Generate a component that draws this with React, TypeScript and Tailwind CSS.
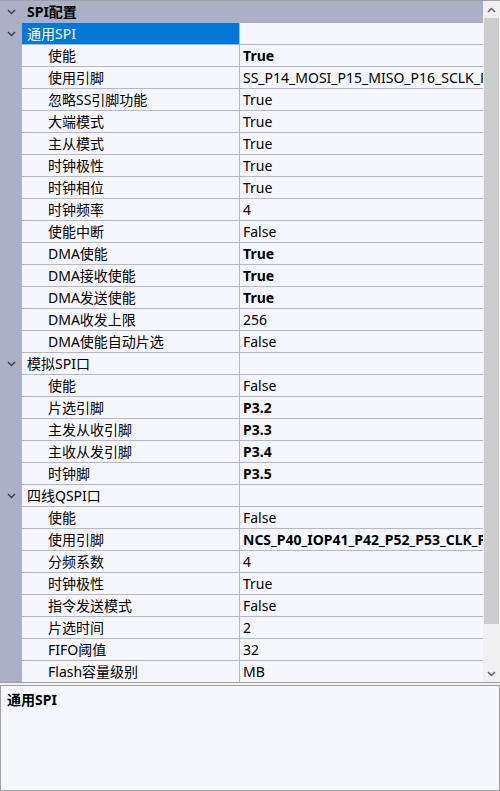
import React from "react";

type Row =
  | { kind: "cat"; label: string; selected?: boolean }
  | { kind: "prop"; label: string; value: string; bold?: boolean };

const rows: Row[] = [
  { kind: "cat", label: "通用SPI", selected: true },
  { kind: "prop", label: "使能", value: "True", bold: true },
  { kind: "prop", label: "使用引脚", value: "SS_P14_MOSI_P15_MISO_P16_SCLK_P17" },
  { kind: "prop", label: "忽略SS引脚功能", value: "True" },
  { kind: "prop", label: "大端模式", value: "True" },
  { kind: "prop", label: "主从模式", value: "True" },
  { kind: "prop", label: "时钟极性", value: "True" },
  { kind: "prop", label: "时钟相位", value: "True" },
  { kind: "prop", label: "时钟频率", value: "4" },
  { kind: "prop", label: "使能中断", value: "False" },
  { kind: "prop", label: "DMA使能", value: "True", bold: true },
  { kind: "prop", label: "DMA接收使能", value: "True", bold: true },
  { kind: "prop", label: "DMA发送使能", value: "True", bold: true },
  { kind: "prop", label: "DMA收发上限", value: "256" },
  { kind: "prop", label: "DMA使能自动片选", value: "False" },
  { kind: "cat", label: "模拟SPI口" },
  { kind: "prop", label: "使能", value: "False" },
  { kind: "prop", label: "片选引脚", value: "P3.2", bold: true },
  { kind: "prop", label: "主发从收引脚", value: "P3.3", bold: true },
  { kind: "prop", label: "主收从发引脚", value: "P3.4", bold: true },
  { kind: "prop", label: "时钟脚", value: "P3.5", bold: true },
  { kind: "cat", label: "四线QSPI口" },
  { kind: "prop", label: "使能", value: "False" },
  { kind: "prop", label: "使用引脚", value: "NCS_P40_IOP41_P42_P52_P53_CLK_P54", bold: true },
  { kind: "prop", label: "分频系数", value: "4" },
  { kind: "prop", label: "时钟极性", value: "True" },
  { kind: "prop", label: "指令发送模式", value: "False" },
  { kind: "prop", label: "片选时间", value: "2" },
  { kind: "prop", label: "FIFO阈值", value: "32" },
  { kind: "prop", label: "Flash容量级别", value: "MB" },
];

function Chevron({ dir = "down", color = "#3c3c3c" }: { dir?: "down" | "up"; color?: string }) {
  return (
    <svg width="9" height="6" viewBox="0 0 9 6" className="block">
      {dir === "down" ? (
        <polyline points="1,1 4.5,4.5 8,1" fill="none" stroke={color} strokeWidth="1.4" />
      ) : (
        <polyline points="1,5 4.5,1.5 8,5" fill="none" stroke={color} strokeWidth="1.4" />
      )}
    </svg>
  );
}

export default function App() {
  return (
    <div
      className="w-[500px] h-[791px] bg-[#f0f0f0] flex flex-col text-[14px] text-black overflow-hidden"
      style={{ fontFamily: '"Noto Sans", "Noto Sans CJK SC", sans-serif' }}
    >
      {/* Property grid */}
      <div className="h-[683px] flex border-t border-b border-[#a0a0a0] bg-[#f5f7fc]">
        <div className="flex-1 flex flex-col overflow-hidden">
          {/* Top category */}
          <div className="h-[22px] shrink-0 flex items-center bg-[#abb0c7]">
            <div className="w-[22px] flex justify-center">
              <Chevron />
            </div>
            <div className="pl-[5px] font-bold leading-none">SPI配置</div>
          </div>
          {rows.map((r, i) => (
            <div key={i} className="h-[22px] shrink-0 flex">
              <div className="w-[22px] shrink-0 bg-[#abb0c7] flex items-center justify-center">
                {r.kind === "cat" && <Chevron />}
              </div>
              {r.kind === "cat" ? (
                <>
                  <div
                    className={`w-[218px] shrink-0 flex items-center pl-[5px] border-b border-r border-[#b4b7c6] whitespace-nowrap ${
                      r.selected ? "bg-[#0078d7] text-white" : ""
                    }`}
                  >
                    {r.label}
                  </div>
                  <div className="flex-1 border-b border-[#b4b7c6]" />
                </>
              ) : (
                <>
                  <div className="w-[218px] shrink-0 flex items-center pl-[26px] border-b border-r border-[#b4b7c6] whitespace-nowrap overflow-hidden">
                    {r.label}
                  </div>
                  <div
                    className={`flex-1 min-w-0 flex items-center pl-[3px] border-b border-[#b4b7c6] whitespace-nowrap overflow-hidden ${
                      r.bold ? "font-bold" : ""
                    }`}
                  >
                    {r.value}
                  </div>
                </>
              )}
            </div>
          ))}
        </div>
        {/* Scrollbar */}
        <div className="w-[17px] shrink-0 bg-[#f0f0f0] flex flex-col">
          <div className="h-[17px] flex items-center justify-center">
            <Chevron dir="up" color="#606060" />
          </div>
          <div className="h-[606px] bg-[#cdcdcd] mx-[1px]" />
          <div className="flex-1" />
          <div className="h-[17px] flex items-center justify-center">
            <Chevron dir="down" color="#606060" />
          </div>
        </div>
      </div>
      {/* Description */}
      <div className="mt-[2px] h-[106px] border border-[#a0a0a0] bg-[#f5f7fc] px-[6px] pt-[3px]">
        <div className="font-bold">通用SPI</div>
      </div>
    </div>
  );
}
